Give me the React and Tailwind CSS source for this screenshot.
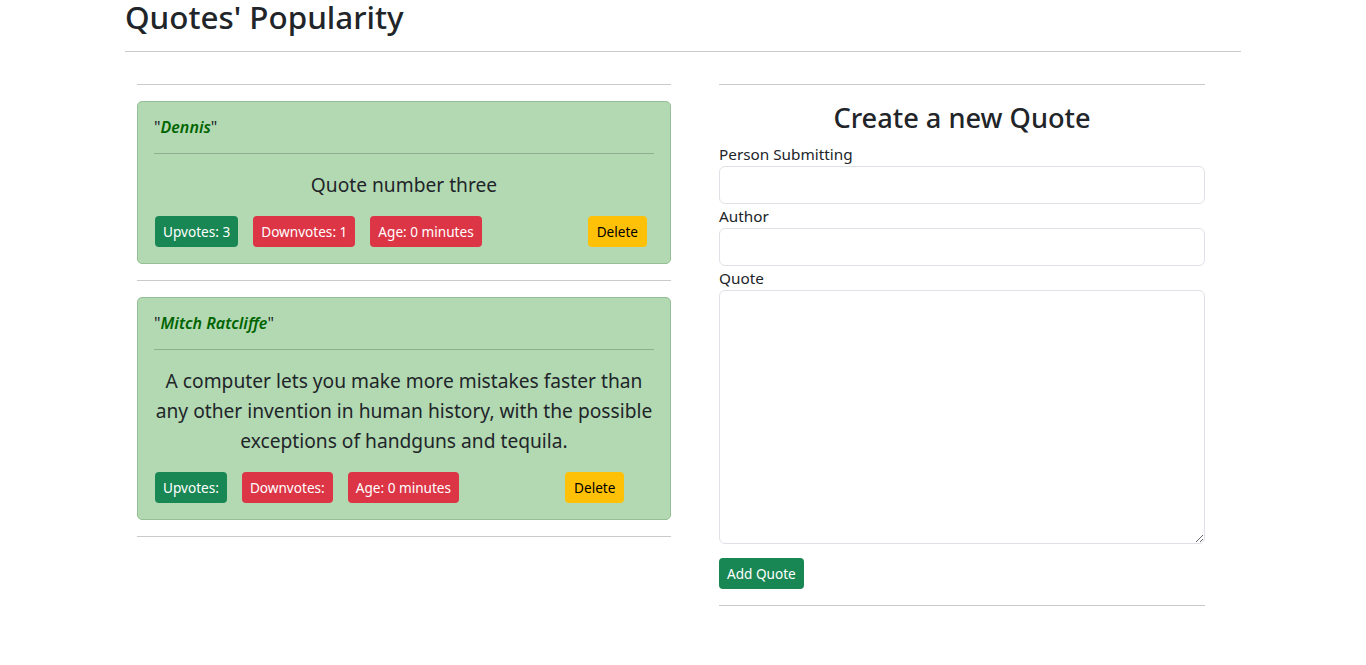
import React from "react"

const quotes = [
    { id: 1, author: "Dennis", text: "Quote number three", up: "3", down: "1", age: "0 minutes" },
    {
        id: 2,
        author: "Mitch Ratcliffe",
        text: "A computer lets you make more mistakes faster than any other invention in human history, with the possible exceptions of handguns and tequila.",
        up: "",
        down: "",
        age: "0 minutes",
    },
]

const Rule = ({ className = "" }) => (
    <hr className={`border-0 border-t border-[#c9cacb] ${className}`} />
)

const btn = "h-[31px] px-2 text-[13.6px] leading-[21px] rounded-[4px] flex items-center whitespace-nowrap shrink-0"

const QuoteCard = ({ q }) => (
    <div className="bg-[#b3d9b3] border border-[#95bf95] rounded-[5px] p-4">
        <p className="text-[16px] leading-[19px] mb-4">
            "<i className="text-[#006400] font-semibold">{q.author}</i>"
        </p>
        <hr className="border-0 border-t border-[#8fae8f]" />
        <p className="mt-4 mb-4 text-[19.2px] leading-[30px] text-center">{q.text}</p>
        <div className="flex items-center gap-[15px] pl-px">
            <button className={`${btn} bg-[#198754] text-white`}>Upvotes: {q.up}</button>
            <button className={`${btn} bg-[#dc3545] text-white`}>Downvotes: {q.down}</button>
            <button className={`${btn} bg-[#dc3545] text-white`}>Age: {q.age}</button>
            <button className={`${btn} bg-[#ffc107] text-black ml-[91px] px-[9px]`}>Delete</button>
        </div>
    </div>
)

const App = () => {
    return (
        <div className="font-['Noto_Sans',sans-serif] text-[#212529] bg-white min-h-screen">
            <div className="mx-auto w-[1140px] px-3">
                <h1 className="text-[31.4px] leading-[34px] font-medium mb-[17px]">Quotes' Popularity</h1>
                <Rule />

                <div className="flex px-3 mt-8 gap-12">
                    <div className="w-[534px]">
                        <Rule />
                        {quotes.map(q => (
                            <div key={q.id}>
                                <div className="my-4">
                                    <QuoteCard q={q} />
                                </div>
                                <Rule />
                            </div>
                        ))}
                    </div>

                    <div className="w-[486px]">
                        <Rule />
                        <h3 className="mt-4 mb-2 text-[27.2px] leading-[33px] font-medium text-center">Create a new Quote</h3>
                        <label className="block text-[15.3px] leading-6">Person Submitting</label>
                        <input className="block w-full h-[38px] border border-[#dee2e6] rounded-[6px] px-3" />
                        <label className="block text-[15.3px] leading-6">Author</label>
                        <input className="block w-full h-[38px] border border-[#dee2e6] rounded-[6px] px-3" />
                        <label className="block text-[15.3px] leading-6">Quote</label>
                        <textarea rows={10} className="block w-full h-[254px] border border-[#dee2e6] rounded-[6px] px-3 py-1.5" />
                        <button className={`${btn} mt-[14px] bg-[#198754] text-white`}>Add Quote</button>
                        <Rule className="mt-4" />
                    </div>
                </div>
            </div>
        </div>
    )
}

export default App
